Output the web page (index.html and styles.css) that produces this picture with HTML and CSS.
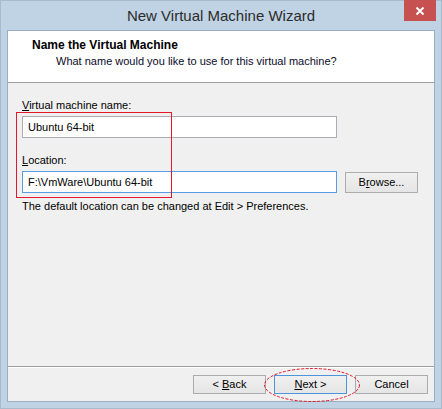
FILE: index.html
```html
<!DOCTYPE html>
<html>
<head>
<meta charset="utf-8">
<link rel="stylesheet" href="styles.css">
</head>
<body>
<div class="window">
  <div class="titlebar">
    <div class="title">New Virtual Machine Wizard</div>
    <div class="close"><svg width="10" height="10" viewBox="0 0 10 10"><path d="M1.5 1.5 L8.5 8.5 M8.5 1.5 L1.5 8.5" stroke="#fff" stroke-width="2"/></svg></div>
  </div>
  <div class="client">
    <div class="header">
      <div class="h-title">Name the Virtual Machine</div>
      <div class="h-sub">What name would you like to use for this virtual machine?</div>
    </div>
    <div class="content">
      <div class="label"><u>V</u>irtual machine name:</div>
      <div class="row">
        <div class="input">Ubuntu 64-bit</div>
      </div>
      <div class="label label2"><u>L</u>ocation:</div>
      <div class="row">
        <div class="input focus">F:\VmWare\Ubuntu 64-bit</div>
        <div class="btn browse">B<u>r</u>owse...</div>
      </div>
      <div class="hint">The default location can be changed at Edit &gt; Preferences.</div>
      <div class="redbox"></div>
    </div>
    <div class="footer">
      <div class="btn">&lt; <u>B</u>ack</div>
      <div class="btn default"><u>N</u>ext &gt;</div>
      <div class="btn">Cancel</div>
      <svg class="ellipse" width="98" height="36" viewBox="0 0 98 36"><ellipse cx="49" cy="18" rx="47.5" ry="16.5" fill="none" stroke="#e3192b" stroke-width="1" stroke-dasharray="3 1.5"/></svg>
    </div>
  </div>
</div>
</body>
</html>
```

FILE: styles.css
```css
html, body {
  margin: 0;
  padding: 0;
}
body {
  width: 442px;
  height: 409px;
  overflow: hidden;
  font-family: "Liberation Sans", Arial, sans-serif;
  font-size: 11px;
  color: #000;
}
.window {
  box-sizing: border-box;
  width: 442px;
  height: 409px;
  background: #bfd3e4;
  border: 1px solid #a7bbcd;
  display: flex;
  flex-direction: column;
  position: relative;
}
.titlebar {
  height: 29px;
  display: flex;
  align-items: center;
  justify-content: center;
}
.title {
  font-size: 15px;
  color: #2b2b2b;
  line-height: 29px;
}
.close {
  position: absolute;
  top: -1px;
  right: 5px;
  width: 32px;
  height: 21px;
  background: #c75050;
  display: flex;
  align-items: center;
  justify-content: center;
}
.client {
  flex: 1;
  margin: 0 6px 6px 6px;
  border: 1px solid #9aafc3;
  background: #f0f0f0;
  display: flex;
  flex-direction: column;
}
.header {
  background: #fff;
  height: 51px;
  border-bottom: 1px solid #a0a0a0;
  box-sizing: content-box;
}
.h-title {
  font-weight: bold;
  font-size: 12px;
  padding: 7px 0 0 24px;
  line-height: 15px;
}
.h-sub {
  padding: 1px 0 0 48px;
  line-height: 15px;
  color: #0a0a2a;
}
.content {
  flex: 1;
  padding: 15px 0 0 14px;
  position: relative;
}
.label {
  line-height: 15px;
  margin-bottom: 3px;
}
.label2 {
  margin-top: 15px;
}
.row {
  display: flex;
  align-items: center;
  gap: 8px;
}
.input {
  box-sizing: border-box;
  width: 315px;
  height: 22px;
  border: 1px solid #abadb3;
  background: #fff;
  padding: 0 0 0 5px;
  line-height: 20px;
}
.input.focus {
  border-color: #569de5;
}
.btn {
  box-sizing: border-box;
  width: 73px;
  height: 19px;
  border: 1px solid #acacac;
  background: linear-gradient(#f0f0f0, #e5e5e5);
  text-align: center;
  line-height: 17px;
}
.browse {
  height: 21px;
  line-height: 19px;
}
.btn.default {
  border-color: #4a95dc;
}
.hint {
  margin-top: 6px;
  line-height: 15px;
}
.redbox {
  position: absolute;
  left: 8px;
  top: 29px;
  width: 154px;
  height: 84px;
  border: 1px solid #e3192b;
}
.footer {
  flex: none;
  height: 35px;
  border-top: 1px solid #a0a0a0;
  box-shadow: inset 0 1px 0 #ffffff;
  display: flex;
  justify-content: flex-end;
  align-items: flex-start;
  padding: 8px 6px 0 0;
  box-sizing: border-box;
  gap: 8px;
  position: relative;
}
.ellipse {
  position: absolute;
  left: 255px;
  top: 0px;
}
```
